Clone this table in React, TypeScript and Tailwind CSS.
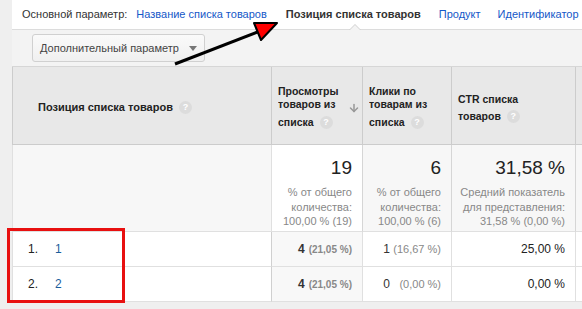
import React from 'react';
import { ArrowDown } from 'lucide-react';

const font = { fontFamily: '"Liberation Sans", Arial, sans-serif' };

function Help() {
    return (
        <span className="inline-flex items-center justify-center w-[13px] h-[13px] rounded-full bg-[#dcdcdc] text-white text-[9px] font-bold leading-none align-middle ml-[6px]">
            ?
        </span>
    );
}

// totals row cell
function Total({ value, lines, bg }: { value: string; lines: string[]; bg: string }) {
    return (
        <div className={`${bg} border-r border-[#d6d6d6] pr-[10px] pt-[12px] text-right`}>
            <div className="text-[19px] leading-[22px] text-[#222]">{value}</div>
            <div className="mt-[6px] text-[11px] leading-[14.5px] text-[#888]">
                {lines.map((l) => (
                    <div key={l}>{l}</div>
                ))}
            </div>
        </div>
    );
}

const rows = [
    { pos: '1', views: '4', viewsPct: '(21,05 %)', clicks: '1', clicksPct: '(16,67 %)', ctr: '25,00 %' },
    { pos: '2', views: '4', viewsPct: '(21,05 %)', clicks: '0', clicksPct: '(0,00 %)', ctr: '0,00 %' },
];

export default function App() {
    return (
        <div className="relative w-[582px] h-[309px] overflow-hidden flex bg-[#efefef] text-[#222]" style={font}>
            {/* left strip */}
            <div className="w-[12px] shrink-0" />

            <div className="flex-1 min-w-0 flex flex-col">
                {/* Dimension tabs */}
                <div className="relative h-[30px] shrink-0 bg-white border-b border-[#dcdcdc] flex items-center text-[11px] whitespace-nowrap">
                    <span className="ml-[10px] text-[#333]">Основной параметр:</span>
                    <span className="ml-[9px] text-[#1558c8]">Название списка товаров</span>
                    <span className="relative ml-[19px] font-bold text-[#333]">
                        Позиция списка товаров
                        <span className="absolute left-1/2 -translate-x-1/2 ml-[2px] top-[18px] w-0 h-0 border-x-[6px] border-x-transparent border-b-[6px] border-b-[#d0d0d0]" />
                        <span className="absolute left-1/2 -translate-x-1/2 ml-[2px] top-[19px] w-0 h-0 border-x-[5px] border-x-transparent border-b-[5px] border-b-[#f3f3f3]" />
                    </span>
                    <span className="ml-[18px] text-[#1558c8]">Продукт</span>
                    <span className="ml-[17px] text-[#1558c8]">Идентификатор</span>
                </div>

                {/* secondary dimension */}
                <div className="h-[36px] shrink-0 bg-[#f3f3f3] pt-[4px] pl-[20px]">
                    <div className="w-[173px] h-[28px] rounded-[3px] border border-[#d0d0d0] bg-gradient-to-b from-[#fafafa] to-[#f0f0f0] flex items-center justify-between pl-[7px] pr-[7px] text-[11px] text-[#444]">
                        <span>Дополнительный параметр</span>
                        <span className="w-0 h-0 border-x-[4px] border-x-transparent border-t-[5px] border-t-[#777]" />
                    </div>
                </div>

                {/* Table */}
                <div className="grid grid-cols-[260px_91px_89px_124px_40px] border-t border-[#d6d6d6] text-[11px]">
                    {/* header */}
                    <div className="h-[78px] bg-[#e8e8e8] border-l border-r border-b border-[#cccccc] flex items-center pl-[25px] pt-[4px] font-bold text-[11px]">
                        Позиция списка товаров <Help />
                    </div>
                    <div className="h-[78px] bg-[#e8e8e8] border-r border-b border-[#cccccc] pl-[6px] pt-[18px] font-bold text-[10.5px] leading-[13px] flex">
                        <div className="w-[64px] overflow-hidden whitespace-nowrap">
                            <div>Просмотры</div>
                            <div>товаров из</div>
                            <div className="mt-[5px] flex items-center">списка<Help /></div>
                        </div>
                        <ArrowDown size={12} strokeWidth={3} className="text-[#999] mt-[17px] ml-[6px]" />
                    </div>
                    <div className="h-[78px] bg-[#e8e8e8] border-r border-b border-[#cccccc] pl-[6px] pt-[18px] font-bold text-[10.5px] leading-[13px]">
                        <div className="w-[64px] overflow-hidden whitespace-nowrap">
                            <div>Клики по</div>
                            <div>товарам из</div>
                            <div className="mt-[5px] flex items-center">списка<Help /></div>
                        </div>
                    </div>
                    <div className="h-[78px] bg-[#e8e8e8] border-r border-b border-[#cccccc] pl-[6px] pt-[26px] font-bold text-[10.5px] leading-[13px]">
                        <div>CTR списка</div>
                        <div className="mt-[4px] flex items-center">товаров<Help /></div>
                    </div>
                    <div className="h-[78px] bg-[#e8e8e8] border-b border-[#cccccc]" />

                    {/* totals */}
                    <div className="h-[87px] bg-[#f7f7f7] border-l border-r border-b border-[#e0e0e0]" />
                    <Total value="19" lines={['% от общего', 'количества:', '100,00 % (19)']} bg="bg-white border-b border-b-[#e0e0e0]" />
                    <Total value="6" lines={['% от общего', 'количества:', '100,00 % (6)']} bg="bg-[#f7f7f7] border-b border-b-[#e0e0e0]" />
                    <Total value="31,58 %" lines={['Средний показатель', 'для представления:', '31,58 % (0,00 %)']} bg="bg-[#f7f7f7] border-b border-b-[#e0e0e0]" />
                    <div className="bg-[#f7f7f7] border-b border-[#e0e0e0]" />

                    {/* rows */}
                    {rows.map((r) => (
                        <React.Fragment key={r.pos}>
                            <div className="h-[35px] bg-white border-l border-r border-b border-[#e0e0e0] border-r-[#d0d0d0] flex items-center pl-[15px] text-[12px]">
                                <span className="w-[27px]">{r.pos}.</span>
                                <span className="text-[#1a5d9c]">{r.pos}</span>
                            </div>
                            <div className="h-[35px] bg-[#f8f8f8] border-r border-b border-[#e0e0e0] flex items-center justify-end pr-[10px] font-bold">
                                <span className="text-[12px] text-[#333]">{r.views}</span>
                                <span className="ml-[4px] text-[10px] text-[#888]">{r.viewsPct}</span>
                            </div>
                            <div className="h-[35px] bg-white border-r border-b border-[#e0e0e0] flex items-center justify-end pr-[10px]">
                                <span className="text-[12px] text-[#333]">{r.clicks}</span>
                                <span className="w-[51px] text-right text-[11px] text-[#888]">{r.clicksPct}</span>
                            </div>
                            <div className="h-[35px] bg-white border-r border-b border-[#e0e0e0] flex items-center justify-end pr-[10px] text-[12px] text-[#222]">
                                {r.ctr}
                            </div>
                            <div className="h-[35px] bg-white border-b border-[#e0e0e0]" />
                        </React.Fragment>
                    ))}
                </div>
            </div>

            {/* annotation: arrow */}
            <svg className="absolute left-0 top-0 pointer-events-none" width="582" height="309">
                <line x1="175" y1="64" x2="260" y2="31" stroke="#000" strokeWidth="3" />
                <polygon points="277,23 254,23 261,40" fill="#ff0000" stroke="#000" strokeWidth="2" strokeLinejoin="round" />
            </svg>

            {/* annotation: highlight box */}
            <div className="absolute left-[7px] top-[228px] w-[118px] h-[75px] border-[3px] border-[#e81010] pointer-events-none" />
        </div>
    );
}
